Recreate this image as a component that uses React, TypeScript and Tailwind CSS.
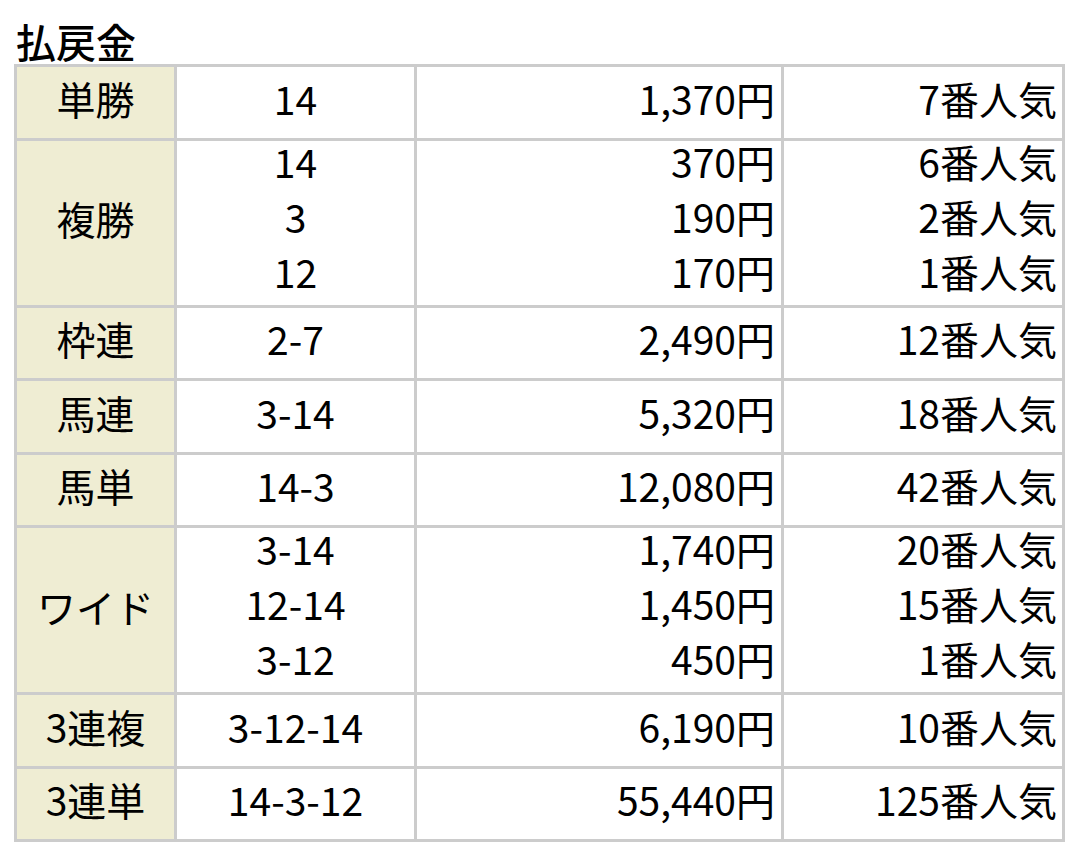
type Row = {
  label: string
  combos: string[]
  payouts: string[]
  ranks: string[]
}

const rows: Row[] = [
  { label: '単勝', combos: ['14'], payouts: ['1,370円'], ranks: ['7番人気'] },
  { label: '複勝', combos: ['14', '3', '12'], payouts: ['370円', '190円', '170円'], ranks: ['6番人気', '2番人気', '1番人気'] },
  { label: '枠連', combos: ['2-7'], payouts: ['2,490円'], ranks: ['12番人気'] },
  { label: '馬連', combos: ['3-14'], payouts: ['5,320円'], ranks: ['18番人気'] },
  { label: '馬単', combos: ['14-3'], payouts: ['12,080円'], ranks: ['42番人気'] },
  { label: 'ワイド', combos: ['3-14', '12-14', '3-12'], payouts: ['1,740円', '1,450円', '450円'], ranks: ['20番人気', '15番人気', '1番人気'] },
  { label: '3連複', combos: ['3-12-14'], payouts: ['6,190円'], ranks: ['10番人気'] },
  { label: '3連単', combos: ['14-3-12'], payouts: ['55,440円'], ranks: ['125番人気'] },
]

// negative top margin nudges the text block up, the way the original sits in its cells
const Lines = ({ items }: { items: string[] }) => (
  <div className={items.length > 1 ? '-mt-[13px]' : '-mt-[8px]'}>
    {items.map((item, i) => (
      <div key={i} className="leading-[55px]">
        {item}
      </div>
    ))}
  </div>
)

export default function App() {
  return (
    <div
      className="min-h-[852px] w-[1080px] bg-white pl-[14px] text-black"
      style={{ fontFamily: '"Noto Sans CJK JP", "Noto Sans", sans-serif' }}
    >
      <h2 className="h-[64px] pt-[16px] pl-[2px] text-[40px] leading-[50px] font-medium">払戻金</h2>
      <table className="table-fixed border-collapse border-[3px] border-[#cccccc] w-[1048px] text-[39px]">
        <colgroup>
          <col className="w-[160px]" />
          <col className="w-[240px]" />
          <col className="w-[367px]" />
          <col className="w-[281px]" />
        </colgroup>
        <tbody>
          {rows.map((row) => {
            const h = row.combos.length > 1 ? 'h-[167px]' : 'h-[73.5px]'
            return (
              <tr key={row.label}>
                <td className={`${h} border-[3px] border-[#cccccc] bg-[#efedd3] text-center align-middle p-0`}>
                  <Lines items={[row.label]} />
                </td>
                <td className={`${h} border-[3px] border-[#cccccc] text-center align-middle p-0`}>
                  <Lines items={row.combos} />
                </td>
                <td className={`${h} border-[3px] border-[#cccccc] text-right align-middle p-0 pr-[6px]`}>
                  <Lines items={row.payouts} />
                </td>
                <td className={`${h} border-[3px] border-[#cccccc] text-right align-middle p-0 pr-[5px]`}>
                  <Lines items={row.ranks} />
                </td>
              </tr>
            )
          })}
        </tbody>
      </table>
    </div>
  )
}
